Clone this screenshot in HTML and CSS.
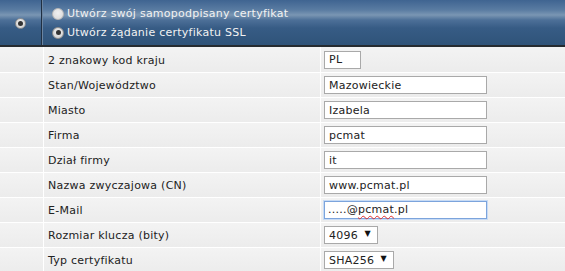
FILE: index.html
```html
<!DOCTYPE html>
<html lang="pl">
<head>
    <meta charset="UTF-8">
    <meta name="viewport" content="width=device-width, initial-scale=1.0">
    <title>Certyfikat SSL</title>
    <link rel="stylesheet" href="styles.css">
</head>
<body>
    <div class="cert-form">
        <div class="head-row">
            <div class="head-check">
                <input type="radio" class="radio" name="section" checked>
            </div>
            <div class="head-options">
                <label class="option"><input type="radio" class="radio off" name="mode"> Utwórz swój samopodpisany certyfikat</label>
                <label class="option"><input type="radio" class="radio" name="mode" checked> Utwórz żądanie certyfikatu SSL</label>
            </div>
        </div>

        <div class="row">
            <div class="gap"></div>
            <div class="label">2 znakowy kod kraju</div>
            <div class="value"><input class="field short" type="text" value="PL"></div>
        </div>
        <div class="row">
            <div class="gap"></div>
            <div class="label">Stan/Województwo</div>
            <div class="value"><input class="field" type="text" value="Mazowieckie"></div>
        </div>
        <div class="row">
            <div class="gap"></div>
            <div class="label">Miasto</div>
            <div class="value"><input class="field" type="text" value="Izabela"></div>
        </div>
        <div class="row">
            <div class="gap"></div>
            <div class="label">Firma</div>
            <div class="value"><input class="field" type="text" value="pcmat"></div>
        </div>
        <div class="row">
            <div class="gap"></div>
            <div class="label">Dział firmy</div>
            <div class="value"><input class="field" type="text" value="it"></div>
        </div>
        <div class="row">
            <div class="gap"></div>
            <div class="label">Nazwa zwyczajowa (CN)</div>
            <div class="value"><input class="field" type="text" value="www.pcmat.pl"></div>
        </div>
        <div class="row">
            <div class="gap"></div>
            <div class="label">E-Mail</div>
            <div class="value"><div class="field focused">.....@<span class="typo">pcmat</span>.pl</div></div>
        </div>
        <div class="row">
            <div class="gap"></div>
            <div class="label">Rozmiar klucza (bity)</div>
            <div class="value">
                <span class="select-box key">
                    <select><option>4096</option><option>2048</option><option>1024</option></select>
                </span>
            </div>
        </div>
        <div class="row">
            <div class="gap"></div>
            <div class="label">Typ certyfikatu</div>
            <div class="value">
                <span class="select-box type">
                    <select><option>SHA256</option><option>SHA1</option></select>
                </span>
            </div>
        </div>
    </div>
</body>
</html>
```

FILE: styles.css
```css
/* page */
body {
    margin: 0;
    padding: 0;
    background-color: #fff;
    font-family: "DejaVu Sans", Verdana, sans-serif;
    font-size: 11px;
    letter-spacing: 0.25px;
    color: #222;
}

.cert-form {
    width: 565px;
}

/* header bar */
.head-row {
    display: flex;
    height: 45px;
    border-bottom: 2px solid #262b30;
    background: linear-gradient(to bottom, #3f6491 0px, #5a7ca2 10px, #7a96b3 15px, #4d7098 20px, #375c85 28px, #2f5379 45px);
    color: #f2f2f2;
}

.head-check {
    width: 42px;
    border-right: 1px solid #1f2f42;
    box-shadow: 1px 0 0 #6b84a0;
    display: flex;
    align-items: center;
    justify-content: center;
    padding-top: 2px;
    box-sizing: border-box;
}

.head-options {
    flex: 1;
    display: flex;
    flex-direction: column;
    justify-content: center;
    gap: 6px;
    padding-left: 10px;
    padding-top: 1px;
}

.option {
    display: flex;
    align-items: center;
    gap: 3px;
    height: 13px;
}

/* radio buttons */
.radio {
    appearance: none;
    margin: 0;
    width: 12px;
    height: 12px;
    border-radius: 50%;
    border: 1px solid #8f8f8f;
    background: radial-gradient(circle at 50% 40%, #f4f4f4 0%, #d6d6d6 70%, #bdbdbd 100%);
    position: relative;
}

.head-check .radio {
    width: 11px;
    height: 11px;
}

.radio:checked::after {
    content: "";
    position: absolute;
    left: 50%;
    top: 50%;
    width: 5px;
    height: 5px;
    margin: -2.5px 0 0 -2.5px;
    border-radius: 50%;
    background-color: #333;
}

.radio.off {
    border-color: #b8b8b8;
    background: radial-gradient(circle at 50% 40%, #f0f0f0 0%, #dcdcdc 80%, #cccccc 100%);
}

/* form rows */
.row {
    display: flex;
    height: 24px;
    border-top: 1px solid #fff;
    background: linear-gradient(to bottom, #f3f3f3, #ececec);
}

.head-row + .row {
    height: 25px;
    border-top: none;
}

.gap {
    width: 43px;
    border-right: 1px solid #fff;
}

.label {
    width: 272px;
    padding-left: 4px;
    border-right: 1px solid #fff;
    display: flex;
    align-items: center;
    padding-top: 1px;
}

.value {
    flex: 1;
    padding-left: 3px;
    display: flex;
    align-items: center;
}

/* inputs */
.field {
    box-sizing: border-box;
    width: 163px;
    height: 18px;
    margin: 0;
    padding: 0 4px;
    border: 1px solid #a9a9a9;
    background-color: #fff;
    font-family: "DejaVu Sans", Verdana, sans-serif;
    font-size: 11px;
    letter-spacing: 0.25px;
    color: #222;
    line-height: 16px;
    outline: none;
}

.field.short {
    width: 37px;
}

.field.focused {
    border-color: #7ca4dc;
    box-shadow: 0 0 0 1px #c7dbf5;
    padding-left: 3px;
}

.typo {
    text-decoration: underline wavy #e0302e;
    text-decoration-thickness: 1px;
    text-underline-offset: 2px;
}

/* selects */
.select-box {
    position: relative;
    display: inline-block;
    height: 18px;
}

.select-box select {
    appearance: none;
    box-sizing: border-box;
    height: 18px;
    margin: 0;
    padding: 0 0 0 4px;
    border: 1px solid #a9a9a9;
    border-radius: 0;
    background-color: #fff;
    font-family: "DejaVu Sans", Verdana, sans-serif;
    font-size: 11px;
    letter-spacing: 0.25px;
    color: #222;
}

.select-box.key select {
    width: 54px;
}

.select-box.type select {
    width: 70px;
}

.select-box::after {
    content: "▼";
    position: absolute;
    right: 7px;
    top: 3px;
    font-size: 8px;
    color: #111;
    pointer-events: none;
}
```
